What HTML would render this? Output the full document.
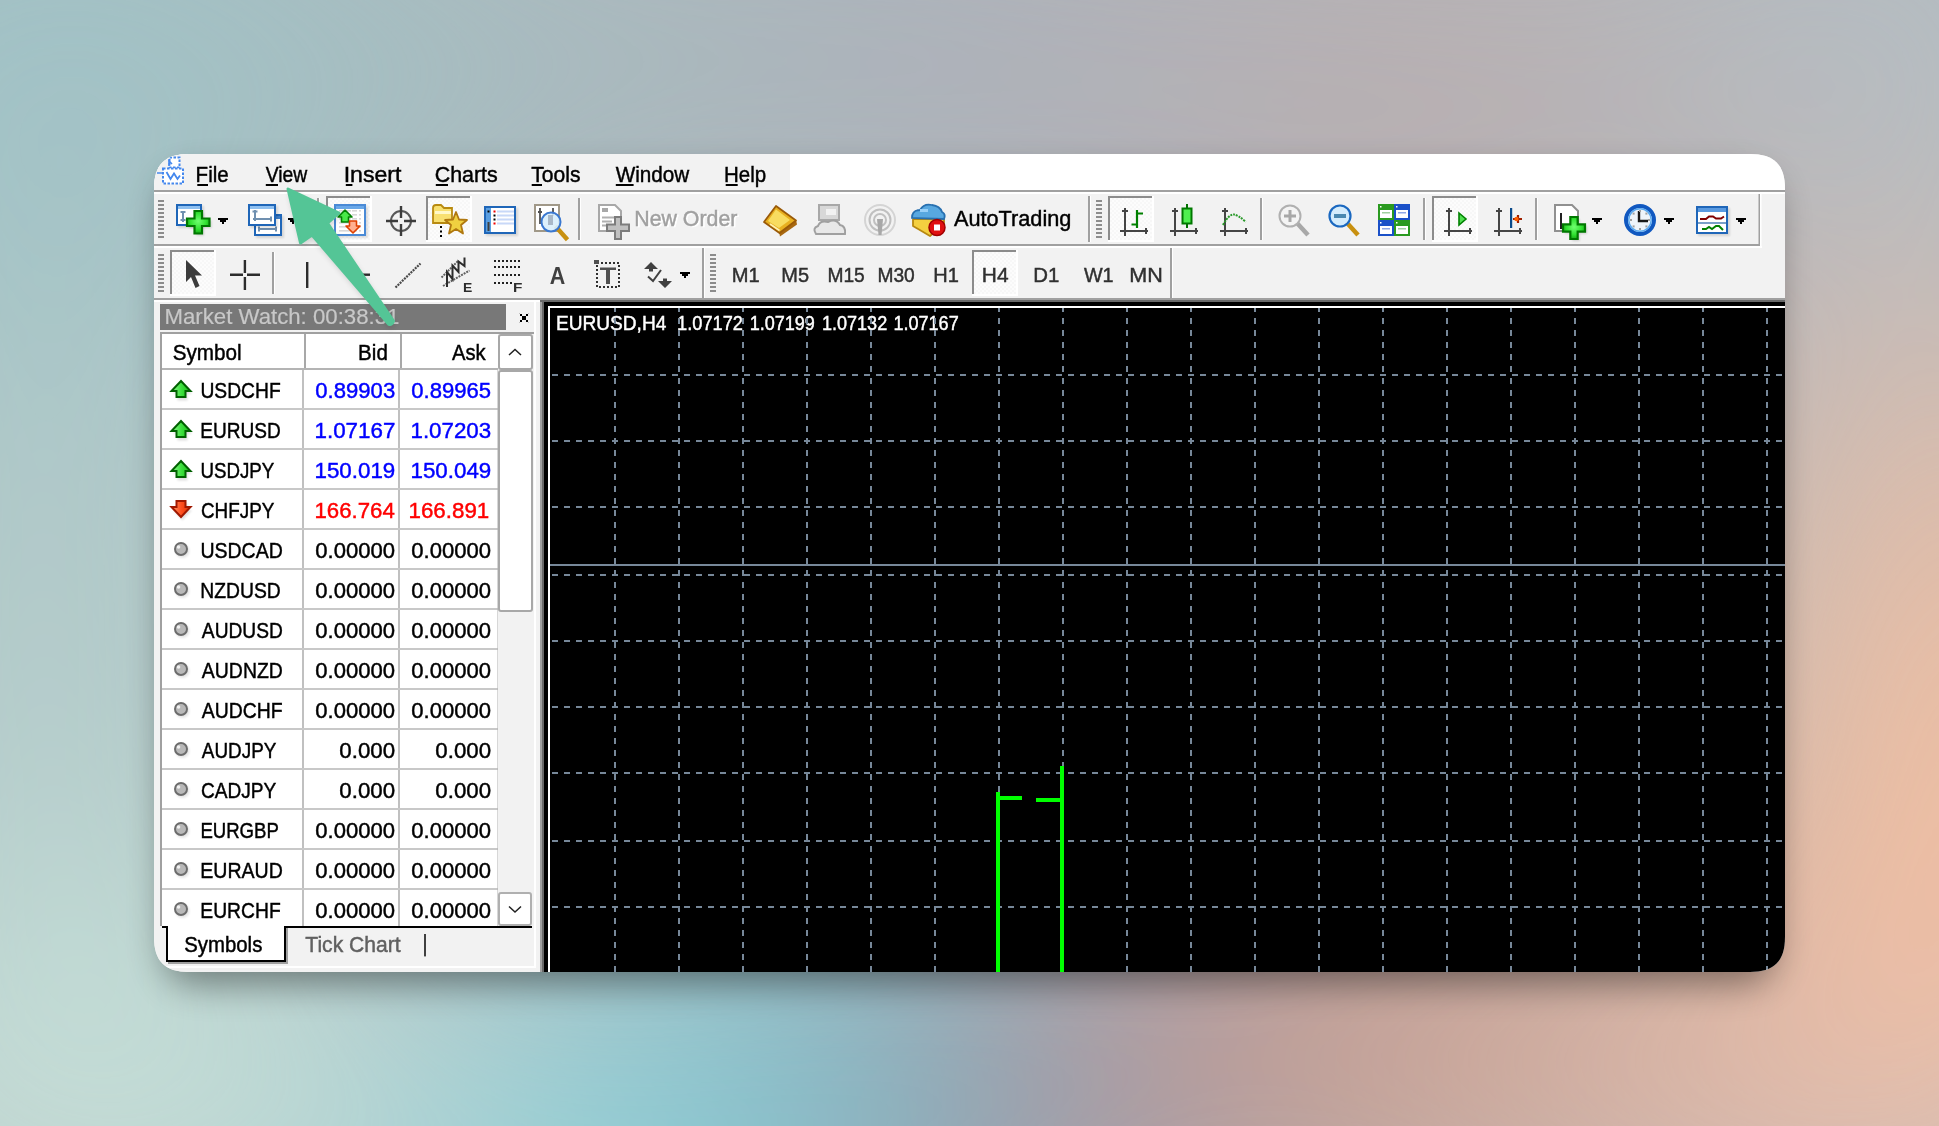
<!DOCTYPE html><html><head><meta charset="utf-8"><style>html,body{margin:0;padding:0;width:1939px;height:1126px;overflow:hidden;background:#b0b8bc}svg{display:block;will-change:transform}text{font-family:"Liberation Sans",sans-serif}</style></head><body>
<svg width="1939" height="1126" viewBox="0 0 1939 1126">
<defs>
<filter id="bgblur" x="-50%" y="-50%" width="200%" height="200%"><feGaussianBlur stdDeviation="170"/></filter>
<filter id="shadow" x="-20%" y="-20%" width="140%" height="140%"><feGaussianBlur stdDeviation="18"/></filter>
<filter id="ishadow" x="-30%" y="-30%" width="160%" height="160%"><feGaussianBlur stdDeviation="1.2"/></filter>
<clipPath id="win"><path d="M189 154 H1750 C1774.15 154 1785 164.85 1785 189 V937 C1785 961.15 1774.15 972 1750 972 H189 C164.85 972 154 961.15 154 937 V189 C154 164.85 164.85 154 189 154 Z"/></clipPath>
<clipPath id="chartclip"><rect x="550" y="308" width="1240" height="664"/></clipPath>
<pattern id="check" width="4" height="4" patternUnits="userSpaceOnUse"><rect width="4" height="4" fill="#f7f7f7"/><rect width="2" height="2" fill="#fcfcfc"/><rect x="2" y="2" width="2" height="2" fill="#fcfcfc"/></pattern>
<filter id="shadow2" x="-30%" y="-30%" width="160%" height="160%"><feGaussianBlur stdDeviation="3"/></filter>
<radialGradient id="gplus" cx="50%" cy="45%" r="60%"><stop offset="0" stop-color="#70ff70"/><stop offset="0.6" stop-color="#30e030"/><stop offset="1" stop-color="#10a010"/></radialGradient>
<linearGradient id="gup" x1="0" y1="0" x2="1" y2="0"><stop offset="0" stop-color="#90ff90"/><stop offset="0.5" stop-color="#40e040"/><stop offset="1" stop-color="#10c010"/></linearGradient>
<linearGradient id="gdn" x1="0" y1="0" x2="1" y2="0"><stop offset="0" stop-color="#ffa070"/><stop offset="0.5" stop-color="#ff5020"/><stop offset="1" stop-color="#e03000"/></linearGradient>
</defs>
<g>
<rect x="0" y="0" width="1939" height="1126" fill="#b2b9bd" />
<g filter="url(#bgblur)">
<ellipse cx="60" cy="80" rx="420" ry="330" fill="#a0c2c6" transform="rotate(0 60 80)"/>
<ellipse cx="40" cy="640" rx="300" ry="330" fill="#b2cccb" transform="rotate(0 40 640)"/>
<ellipse cx="100" cy="1100" rx="380" ry="220" fill="#c8e2da" transform="rotate(0 100 1100)"/>
<ellipse cx="680" cy="1150" rx="320" ry="160" fill="#78d8e2" transform="rotate(-25 680 1150)"/>
<ellipse cx="1030" cy="1100" rx="230" ry="150" fill="#6c80a0" transform="rotate(-30 1030 1100)"/>
<ellipse cx="1390" cy="1030" rx="320" ry="130" fill="#d28a72" transform="rotate(-10 1390 1030)"/>
<ellipse cx="1700" cy="1140" rx="260" ry="140" fill="#e2b8a6" transform="rotate(0 1700 1140)"/>
<ellipse cx="1960" cy="1126" rx="200" ry="160" fill="#e2c2ba" transform="rotate(0 1960 1126)"/>
<ellipse cx="1980" cy="800" rx="240" ry="330" fill="#fcc09c" transform="rotate(0 1980 800)"/>
<ellipse cx="1960" cy="540" rx="220" ry="220" fill="#ecbea4" transform="rotate(0 1960 540)"/>
<ellipse cx="1380" cy="110" rx="380" ry="160" fill="#bcaaab" transform="rotate(0 1380 110)"/>
<ellipse cx="880" cy="60" rx="360" ry="160" fill="#aaadb8" transform="rotate(0 880 60)"/>
<ellipse cx="1900" cy="40" rx="200" ry="200" fill="#b6c0c6" transform="rotate(0 1900 40)"/>
<ellipse cx="500" cy="60" rx="300" ry="160" fill="#a4bcc0" transform="rotate(0 500 60)"/>
</g></g>
<path d="M199 176 H1740 C1764.15 176 1775 186.85 1775 211 V949 C1775 973.15 1764.15 984 1740 984 H199 C174.85 984 164 973.15 164 949 V211 C164 186.85 174.85 176 199 176 Z" fill="#000" opacity="0.42" filter="url(#shadow)"/>
<g clip-path="url(#win)">
<rect x="154" y="154" width="1631" height="818" fill="#f2f2f2" />
<rect x="154" y="154" width="1631" height="36" fill="#ffffff" />
<rect x="154" y="154" width="636" height="36" fill="#f2f2f2" />
<rect x="154" y="190" width="1631" height="2" fill="#a0a0a0" />
<rect x="154" y="192" width="1631" height="2" fill="#ffffff" />
<rect x="154" y="194" width="1631" height="50" fill="#f2f2f2" />
<rect x="154" y="244" width="1606" height="2" fill="#a0a0a0" />
<rect x="154" y="246" width="1608" height="2" fill="#ffffff" />
<rect x="154" y="248" width="1631" height="50" fill="#f2f2f2" />
<rect x="154" y="298" width="1631" height="2" fill="#a0a0a0" />
<rect x="154" y="300" width="1631" height="2" fill="#696969" />
<text x="195.62" y="181.5" font-size="22.4" fill="#000" textLength="33.10" lengthAdjust="spacingAndGlyphs" stroke="#000" stroke-width="0.45" >File</text>
<rect x="197.3" y="184" width="10.7" height="2" fill="#000" />
<text x="265.72" y="181.5" font-size="22.4" fill="#000" textLength="41.54" lengthAdjust="spacingAndGlyphs" stroke="#000" stroke-width="0.45" >View</text>
<rect x="265.8" y="184" width="12.2" height="2" fill="#000" />
<text x="343.67" y="181.5" font-size="22.4" fill="#000" textLength="57.80" lengthAdjust="spacingAndGlyphs" stroke="#000" stroke-width="0.45" >Insert</text>
<rect x="345.8" y="184" width="6.6" height="2" fill="#000" />
<text x="434.71" y="181.5" font-size="22.4" fill="#000" textLength="63.06" lengthAdjust="spacingAndGlyphs" stroke="#000" stroke-width="0.45" >Charts</text>
<rect x="435.8" y="184" width="12.2" height="2" fill="#000" />
<text x="531.25" y="181.5" font-size="22.4" fill="#000" textLength="49.18" lengthAdjust="spacingAndGlyphs" stroke="#000" stroke-width="0.45" >Tools</text>
<rect x="531.7" y="184" width="10.3" height="2" fill="#000" />
<text x="615.71" y="181.5" font-size="22.4" fill="#000" textLength="73.54" lengthAdjust="spacingAndGlyphs" stroke="#000" stroke-width="0.45" >Window</text>
<rect x="615.8" y="184" width="17.8" height="2" fill="#000" />
<text x="724.02" y="181.5" font-size="22.4" fill="#000" textLength="42.14" lengthAdjust="spacingAndGlyphs" stroke="#000" stroke-width="0.45" >Help</text>
<rect x="725.7" y="184" width="12" height="2" fill="#000" />
<g fill="none" stroke="#4488ee" stroke-width="2">
<rect x="169.5" y="157.5" width="10" height="10" fill="#fff" stroke-dasharray="2.5 1.5"/>
<rect x="163" y="168.5" width="20" height="15" fill="#fff" stroke-dasharray="2.5 1.5"/>
<path d="M166.5 172 L170.5 179 L174 173.5 L177.5 179 L180 175.5" stroke-width="1.8"/>
<path d="M157 173 H163" stroke-width="1.6"/>
<path d="M169 166 V161 L172 164" stroke-width="1.6"/>
</g>
<rect x="158" y="200" width="6" height="2" fill="#8c8c8c" />
<rect x="158" y="204" width="6" height="2" fill="#8c8c8c" />
<rect x="158" y="208" width="6" height="2" fill="#8c8c8c" />
<rect x="158" y="212" width="6" height="2" fill="#8c8c8c" />
<rect x="158" y="216" width="6" height="2" fill="#8c8c8c" />
<rect x="158" y="220" width="6" height="2" fill="#8c8c8c" />
<rect x="158" y="224" width="6" height="2" fill="#8c8c8c" />
<rect x="158" y="228" width="6" height="2" fill="#8c8c8c" />
<rect x="158" y="232" width="6" height="2" fill="#8c8c8c" />
<rect x="158" y="236" width="6" height="2" fill="#8c8c8c" />
<rect x="178" y="206" width="26" height="22" fill="#000" opacity="0.12" filter="url(#ishadow)"/>
<rect x="177" y="205" width="24" height="20" fill="#fff" stroke="#1f66b8" stroke-width="2"/>
<rect x="178" y="206" width="22" height="3" fill="#8fc0f0" />
<path d="M183 211 v11 M180.5 212 h5 M180.5 220 h5" stroke="#7090b0" stroke-width="2"/>
<path d="M194.5 211 h7.5 v7.5 h7.5 v7.5 h-7.5 v7.5 h-7.5 v-7.5 h-7.5 v-7.5 h7.5 z" fill="#000" opacity="0.15" transform="translate(2,2)" filter="url(#ishadow)"/>
<path d="M194.5 211 h7.5 v7.5 h7.5 v7.5 h-7.5 v7.5 h-7.5 v-7.5 h-7.5 v-7.5 h7.5 z" fill="url(#gplus)" stroke="#007800" stroke-width="2.2" stroke-linejoin="miter"/>
<path d="M218 218 h10 v2 h-2 v2 h-2 v2 h-2 v-2 h-2 v-2 h-2 z" fill="#000"/>
<rect x="256" y="216" width="28" height="22" fill="#000" opacity="0.12" filter="url(#ishadow)"/>
<rect x="255" y="215" width="26" height="20" fill="#fff" stroke="#1f66b8" stroke-width="2"/>
<rect x="256" y="216" width="24" height="3" fill="#3f7fc8" />
<path d="M258 229 h19 M259 226.5 v5 M276 226.5 v5" stroke="#7090b0" stroke-width="2"/>
<rect x="250" y="206" width="28" height="22" fill="#000" opacity="0.12" filter="url(#ishadow)"/>
<rect x="249" y="205" width="26" height="20" fill="#fff" stroke="#1f66b8" stroke-width="2"/>
<rect x="250" y="206" width="24" height="3" fill="#8fc0f0" />
<path d="M255 210 v11 M252.5 211.5 h5 M253 219 h19 M271 216.5 v5" stroke="#7090b0" stroke-width="2"/>
<path d="M288 218 h10 v2 h-2 v2 h-2 v2 h-2 v-2 h-2 v-2 h-2 z" fill="#000"/>
<rect x="317" y="198" width="2" height="42" fill="#a0a0a0" />
<rect x="319" y="198" width="1" height="42" fill="#ffffff" />
<rect x="326" y="196" width="44" height="44" fill="url(#check)" />
<rect x="326" y="196" width="44" height="2" fill="#8c8c8c" />
<rect x="326" y="196" width="2" height="44" fill="#8c8c8c" />
<rect x="326" y="240" width="46" height="2" fill="#ffffff" />
<rect x="370" y="196" width="2" height="46" fill="#ffffff" />
<rect x="336" y="206" width="32" height="32" fill="#000" opacity="0.12" filter="url(#ishadow)"/>
<rect x="335" y="205" width="30" height="30" fill="#fff" stroke="#4a8ad6" stroke-width="2"/>
<rect x="336" y="206" width="28" height="3" fill="#6aa8e8" />
<rect x="339" y="210" width="12" height="1.6" fill="#d8d8d8" />
<rect x="352" y="210" width="5" height="1.6" fill="#d8d8d8" />
<rect x="359" y="210" width="2" height="1.6" fill="#d8d8d8" />
<rect x="339" y="214" width="12" height="1.6" fill="#d8d8d8" />
<rect x="352" y="214" width="5" height="1.6" fill="#d8d8d8" />
<rect x="359" y="214" width="2" height="1.6" fill="#d8d8d8" />
<rect x="339" y="218" width="12" height="1.6" fill="#d8d8d8" />
<rect x="352" y="218" width="5" height="1.6" fill="#d8d8d8" />
<rect x="359" y="218" width="2" height="1.6" fill="#d8d8d8" />
<rect x="339" y="222" width="12" height="1.6" fill="#d8d8d8" />
<rect x="352" y="222" width="5" height="1.6" fill="#d8d8d8" />
<rect x="359" y="222" width="2" height="1.6" fill="#d8d8d8" />
<rect x="339" y="226" width="12" height="1.6" fill="#d8d8d8" />
<rect x="352" y="226" width="5" height="1.6" fill="#d8d8d8" />
<rect x="359" y="226" width="2" height="1.6" fill="#d8d8d8" />
<rect x="339" y="230" width="12" height="1.6" fill="#d8d8d8" />
<rect x="352" y="230" width="5" height="1.6" fill="#d8d8d8" />
<rect x="359" y="230" width="2" height="1.6" fill="#d8d8d8" />
<path d="M345 210 L352 217 L348.5 217 L348.5 222 L341.5 222 L341.5 217 L338 217 Z" fill="#48e848" stroke="#008000" stroke-width="1.6" stroke-linejoin="round"/>
<path d="M353 233 L360 226 L356.5 226 L356.5 221 L349.5 221 L349.5 226 L346 226 Z" fill="#ffb090" stroke="#e04000" stroke-width="1.6" stroke-linejoin="round"/>
<g stroke="#3c3c3c" fill="none"><circle cx="401" cy="221" r="10" stroke-width="2" opacity="0.85"/><path d="M401 206 v12 M401 224 v12 M386 221 h12 M404 221 h12" stroke-width="2.4"/></g>
<rect x="426" y="196" width="44" height="44" fill="url(#check)" />
<rect x="426" y="196" width="44" height="2" fill="#8c8c8c" />
<rect x="426" y="196" width="2" height="44" fill="#8c8c8c" />
<rect x="426" y="240" width="46" height="2" fill="#ffffff" />
<rect x="470" y="196" width="2" height="46" fill="#ffffff" />
<path d="M433 223 V208 Q433 205 436 205 H441 L444 208 H452 V223 Z" fill="#f8e070" stroke="#b88a10" stroke-width="1.8"/>
<rect x="435" y="211" width="16" height="3" fill="#fff8c8" />
<path d="M456 212 L459 219.5 L467 220 L461 225 L463 233.5 L456 229 L449 233.5 L451 225 L445 220 L453 219.5 Z" fill="#f0d040" stroke="#b07810" stroke-width="1.8" stroke-linejoin="round"/>
<rect x="440" y="226" width="2" height="2" fill="#000" />
<rect x="440" y="230.5" width="2" height="2" fill="#000" />
<rect x="440" y="235" width="2" height="2" fill="#000" />
<rect x="486" y="208" width="32" height="28" fill="#000" opacity="0.12" filter="url(#ishadow)"/>
<rect x="485" y="207" width="30" height="26" fill="#fff" stroke="#1f66b8" stroke-width="2"/>
<rect x="486" y="208" width="5" height="24" fill="#5a9ee0"/>
<rect x="487.5" y="222" width="2" height="9" fill="#404040" />
<rect x="487.5" y="210.5" width="2" height="2" fill="#000" />
<rect x="493.5" y="210.5" width="2" height="2" fill="#f00000" />
<rect x="497" y="210.5" width="17" height="2" fill="#c8d8f8" />
<rect x="493.5" y="214.5" width="2" height="2" fill="#000" />
<rect x="497" y="214.5" width="17" height="2" fill="#c8d8f8" />
<rect x="493.5" y="218.5" width="2" height="2" fill="#000" />
<rect x="497" y="218.5" width="17" height="2" fill="#c8d8f8" />
<rect x="493.5" y="222.5" width="2" height="2" fill="#f00000" />
<rect x="497" y="222.5" width="17" height="2" fill="#c8d8f8" />
<rect x="535" y="205" width="24" height="26" fill="#fff" stroke="#a09888" stroke-width="2"/>
<path d="M540 208 v16 M538 212 h4 M553 208 v8" stroke="#505050" stroke-width="1.8"/>
<path d="M557 228 L566 238" stroke="#c89010" stroke-width="4.5" stroke-linecap="square"/>
<circle cx="551" cy="222" r="9.5" fill="#d8eefc" fill-opacity="0.9" stroke="#3a78d0" stroke-width="2"/>
<rect x="548" y="215" width="5" height="10" fill="#a8b8c8" />
<rect x="578" y="198" width="2" height="42" fill="#a0a0a0" />
<rect x="580" y="198" width="1" height="42" fill="#ffffff" />
<path d="M599 205 H615 L621 211 V231 H599 Z" fill="#fff" stroke="#a8a8a8" stroke-width="2"/>
<rect x="602" y="208" width="6" height="4" fill="#a8a8a8" />
<rect x="602" y="216.5" width="13" height="2" fill="#b0b0b0" />
<rect x="602" y="220.5" width="10" height="2" fill="#b0b0b0" />
<rect x="602" y="224.5" width="8" height="2" fill="#b0b0b0" />
<path d="M615 217 h6 v7.5 h8 v6.5 h-8 v8 h-6 v-8 h-8 v-6.5 h8 z" fill="#c0c0c0" stroke="#7c7c7c" stroke-width="2"/>
<text x="635.75" y="227" font-size="22.4" fill="#ffffff" textLength="103.10" lengthAdjust="spacingAndGlyphs" stroke="#ffffff" stroke-width="0.45" >New Order</text>
<text x="634.25" y="226" font-size="22.4" fill="#a0a0a0" textLength="103.10" lengthAdjust="spacingAndGlyphs" stroke="#a0a0a0" stroke-width="0.45" >New Order</text>
<path d="M779 232 L796 220 L797 224.5 L780 236.5 Z" fill="#a86810"/>
<path d="M776 206 L796 220.5 L779.5 233 L764 222 Z" fill="#e8b020" stroke="#9a5a08" stroke-width="1.8" stroke-linejoin="round"/>
<path d="M776 209.5 L790 220 L779 228 L768 221 Z" fill="#f8dc60"/>
<path d="M770 224 L779.5 230.5" stroke="#fff0b0" stroke-width="1.6"/>
<rect x="819" y="205" width="20" height="15" fill="#d8d8d8" stroke="#a8a8a8" stroke-width="2"/>
<rect x="826" y="209" width="10" height="6" fill="#f2f2f2" />
<path d="M816 234 Q812 228 818 226 Q820 220 828 222 Q836 218 840 225 Q846 226 845 234 Z" fill="#e8e8e8" stroke="#a0a0a0" stroke-width="2"/>
<g fill="none" stroke="#c0c0c0" stroke-width="2"><circle cx="880" cy="220" r="15" stroke="#d4d4d4"/><circle cx="880" cy="220" r="10.5"/><circle cx="880" cy="220" r="6"/></g>
<path d="M877 219 L883 219 L881.5 235 L878.5 235 Z" fill="#a8a8a8"/>
<path d="M913 219 L944 219 L944 224 L930 236 L913 226 Z" fill="#f4d040" stroke="#b88810" stroke-width="1.8" stroke-linejoin="round"/>
<path d="M912 218 Q912 210 920 210 Q924 203 932 205 Q940 206 942 212 Q946 214 944 219 Z" fill="#58a8e0" stroke="#2870b0" stroke-width="1.8"/>
<rect x="920" y="209" width="8" height="3" fill="#98d0f8" />
<circle cx="937" cy="227.5" r="8" fill="#e01010" stroke="#a00000" stroke-width="1.5"/>
<rect x="934" y="224.5" width="6" height="6" fill="#ffffff" />
<text x="953.96" y="225.5" font-size="22.4" fill="#000" textLength="117.43" lengthAdjust="spacingAndGlyphs" stroke="#000" stroke-width="0.45" >AutoTrading</text>
<rect x="1088" y="196" width="2" height="46" fill="#a0a0a0" />
<rect x="1090" y="196" width="1" height="46" fill="#ffffff" />
<rect x="1096" y="200" width="6" height="2" fill="#8c8c8c" />
<rect x="1096" y="204" width="6" height="2" fill="#8c8c8c" />
<rect x="1096" y="208" width="6" height="2" fill="#8c8c8c" />
<rect x="1096" y="212" width="6" height="2" fill="#8c8c8c" />
<rect x="1096" y="216" width="6" height="2" fill="#8c8c8c" />
<rect x="1096" y="220" width="6" height="2" fill="#8c8c8c" />
<rect x="1096" y="224" width="6" height="2" fill="#8c8c8c" />
<rect x="1096" y="228" width="6" height="2" fill="#8c8c8c" />
<rect x="1096" y="232" width="6" height="2" fill="#8c8c8c" />
<rect x="1096" y="236" width="6" height="2" fill="#8c8c8c" />
<rect x="1108" y="196" width="44" height="44" fill="url(#check)" />
<rect x="1108" y="196" width="44" height="2" fill="#8c8c8c" />
<rect x="1108" y="196" width="2" height="44" fill="#8c8c8c" />
<rect x="1108" y="240" width="46" height="2" fill="#ffffff" />
<rect x="1152" y="196" width="2" height="46" fill="#ffffff" />
<rect x="1124" y="208" width="2" height="28" fill="#454545" />
<rect x="1122" y="210" width="6" height="2" fill="#454545" />
<rect x="1120" y="230" width="28" height="2" fill="#454545" />
<rect x="1145" y="228" width="2" height="6" fill="#454545" />
<path d="M1137 210 V228 M1137 213.5 H1143 M1131.5 224.5 H1137" stroke="#008000" stroke-width="2.2"/>
<rect x="1174" y="208" width="2" height="28" fill="#454545" />
<rect x="1172" y="210" width="6" height="2" fill="#454545" />
<rect x="1170" y="230" width="28" height="2" fill="#454545" />
<rect x="1195" y="228" width="2" height="6" fill="#454545" />
<rect x="1186" y="204" width="2" height="24" fill="#007000" />
<rect x="1182.5" y="208.5" width="9" height="15" fill="#50f050" stroke="#007800" stroke-width="2"/>
<rect x="1224" y="208" width="2" height="28" fill="#454545" />
<rect x="1222" y="210" width="6" height="2" fill="#454545" />
<rect x="1220" y="230" width="28" height="2" fill="#454545" />
<rect x="1245" y="228" width="2" height="6" fill="#454545" />
<path d="M1223 225 Q1229 214 1234 214.5 Q1238 215 1246 222" fill="none" stroke="#2a9a2a" stroke-width="2" stroke-dasharray="2 1"/>
<rect x="1260" y="198" width="2" height="42" fill="#a0a0a0" />
<rect x="1262" y="198" width="1" height="42" fill="#ffffff" />
<path d="M1297 223 L1308 235" stroke="#a8a8a8" stroke-width="4.5"/>
<circle cx="1290" cy="216" r="10.5" fill="#f4f4f4" stroke="#b0b0b0" stroke-width="2"/>
<path d="M1290 210 v12 M1284 216 h12" stroke="#a8a8a8" stroke-width="3"/>
<path d="M1348 224 L1358 235" stroke="#c89010" stroke-width="4.5"/>
<circle cx="1340" cy="216" r="10.5" fill="#d4ecfc" stroke="#1a68c0" stroke-width="2.2"/>
<rect x="1334" y="214" width="12" height="4" fill="#4a88b0" />
<rect x="1378" y="204" width="16" height="16" fill="#2a9a20" />
<rect x="1380" y="210" width="12" height="8" fill="#ffffff" />
<rect x="1382" y="212" width="8" height="1.5" fill="#a0d0a0" />
<rect x="1380" y="206" width="1.5" height="1.5" fill="#ffffff" />
<rect x="1394" y="204" width="16" height="16" fill="#1a50c8" />
<rect x="1396" y="210" width="12" height="8" fill="#ffffff" />
<rect x="1398" y="212" width="8" height="1.5" fill="#90a8e8" />
<rect x="1396" y="206" width="1.5" height="1.5" fill="#ffffff" />
<rect x="1378" y="220" width="16" height="16" fill="#1a50c8" />
<rect x="1380" y="226" width="12" height="8" fill="#ffffff" />
<rect x="1382" y="228" width="8" height="1.5" fill="#90a8e8" />
<rect x="1380" y="222" width="1.5" height="1.5" fill="#ffffff" />
<rect x="1394" y="220" width="16" height="16" fill="#2a9a20" />
<rect x="1396" y="226" width="12" height="8" fill="#ffffff" />
<rect x="1398" y="228" width="8" height="1.5" fill="#a0d0a0" />
<rect x="1396" y="222" width="1.5" height="1.5" fill="#ffffff" />
<rect x="1423" y="198" width="2" height="42" fill="#a0a0a0" />
<rect x="1425" y="198" width="1" height="42" fill="#ffffff" />
<rect x="1432" y="196" width="44" height="44" fill="url(#check)" />
<rect x="1432" y="196" width="44" height="2" fill="#8c8c8c" />
<rect x="1432" y="196" width="2" height="44" fill="#8c8c8c" />
<rect x="1432" y="240" width="46" height="2" fill="#ffffff" />
<rect x="1476" y="196" width="2" height="46" fill="#ffffff" />
<rect x="1448" y="208" width="2" height="28" fill="#454545" />
<rect x="1446" y="210" width="6" height="2" fill="#454545" />
<rect x="1444" y="230" width="28" height="2" fill="#454545" />
<rect x="1469" y="228" width="2" height="6" fill="#454545" />
<path d="M1459 213 L1466 219 L1459 225 Z" fill="#50e050" stroke="#008000" stroke-width="1.6"/>
<rect x="1498" y="208" width="2" height="28" fill="#454545" />
<rect x="1496" y="210" width="6" height="2" fill="#454545" />
<rect x="1494" y="230" width="28" height="2" fill="#454545" />
<rect x="1519" y="228" width="2" height="6" fill="#454545" />
<rect x="1510" y="208" width="2.2" height="20" fill="#0a4a8a" />
<path d="M1513 219 H1522 M1518 215 V223" stroke="#a02000" stroke-width="2.2"/>
<circle cx="1516.5" cy="219" r="2.2" fill="#ff6000"/>
<rect x="1535" y="198" width="2" height="42" fill="#a0a0a0" />
<rect x="1537" y="198" width="1" height="42" fill="#ffffff" />
<path d="M1555 205 H1572 L1578 211 V231 H1555 Z" fill="#fff" stroke="#909090" stroke-width="2"/>
<rect x="1560" y="213" width="2" height="16" fill="#202020" />
<path d="M1570.3333333333333 217 h7.333333333333333 v7.333333333333333 h7.333333333333333 v7.333333333333333 h-7.333333333333333 v7.333333333333333 h-7.333333333333333 v-7.333333333333333 h-7.333333333333333 v-7.333333333333333 h7.333333333333333 z" fill="#000" opacity="0.15" transform="translate(2,2)" filter="url(#ishadow)"/>
<path d="M1570.3333333333333 217 h7.333333333333333 v7.333333333333333 h7.333333333333333 v7.333333333333333 h-7.333333333333333 v7.333333333333333 h-7.333333333333333 v-7.333333333333333 h-7.333333333333333 v-7.333333333333333 h7.333333333333333 z" fill="url(#gplus)" stroke="#007800" stroke-width="2.2" stroke-linejoin="miter"/>
<path d="M1592 218 h10 v2 h-2 v2 h-2 v2 h-2 v-2 h-2 v-2 h-2 z" fill="#000"/>
<circle cx="1640" cy="220" r="14" fill="#eef4fa" stroke="#1058c0" stroke-width="4"/>
<circle cx="1640" cy="220" r="11.2" fill="none" stroke="#5aaaf0" stroke-width="1.4"/>
<path d="M1639 211 V221 H1648" fill="none" stroke="#181818" stroke-width="2.4"/>
<rect x="1639" y="210" width="2" height="2" fill="#a0a0a0" />
<rect x="1648" y="219" width="2" height="2" fill="#a0a0a0" />
<rect x="1639" y="228" width="2" height="2" fill="#a0a0a0" />
<rect x="1630" y="219" width="2" height="2" fill="#a0a0a0" />
<rect x="1645.4" y="212.6" width="2" height="2" fill="#a0a0a0" />
<rect x="1645.4" y="225.4" width="2" height="2" fill="#a0a0a0" />
<rect x="1632.6" y="225.4" width="2" height="2" fill="#a0a0a0" />
<rect x="1632.6" y="212.6" width="2" height="2" fill="#a0a0a0" />
<path d="M1664 218 h10 v2 h-2 v2 h-2 v2 h-2 v-2 h-2 v-2 h-2 z" fill="#000"/>
<rect x="1698" y="208" width="32" height="28" fill="#000" opacity="0.12" filter="url(#ishadow)"/>
<rect x="1697" y="207" width="30" height="26" fill="#fff" stroke="#1f66b8" stroke-width="2"/>
<rect x="1698" y="208" width="28" height="4" fill="#5a9ae0" />
<rect x="1698" y="222" width="28" height="2" fill="#7aa0c8" />
<path d="M1700 219 L1706 219 L1709 216.5 L1713 216.5 L1716 218.5 L1721 218.5 L1724 216.5" fill="none" stroke="#800000" stroke-width="2"/>
<path d="M1702 229 L1706 229 L1709 227 L1712 229 L1716 226 L1719 226 L1723 230" fill="none" stroke="#008000" stroke-width="2"/>
<path d="M1736 218 h10 v2 h-2 v2 h-2 v2 h-2 v-2 h-2 v-2 h-2 z" fill="#000"/>
<rect x="1758.5" y="194" width="1.5" height="52" fill="#a0a0a0" />
<rect x="1760" y="194" width="1.5" height="53" fill="#ffffff" />
<rect x="158" y="254" width="6" height="2" fill="#8c8c8c" />
<rect x="158" y="258" width="6" height="2" fill="#8c8c8c" />
<rect x="158" y="262" width="6" height="2" fill="#8c8c8c" />
<rect x="158" y="266" width="6" height="2" fill="#8c8c8c" />
<rect x="158" y="270" width="6" height="2" fill="#8c8c8c" />
<rect x="158" y="274" width="6" height="2" fill="#8c8c8c" />
<rect x="158" y="278" width="6" height="2" fill="#8c8c8c" />
<rect x="158" y="282" width="6" height="2" fill="#8c8c8c" />
<rect x="158" y="286" width="6" height="2" fill="#8c8c8c" />
<rect x="158" y="290" width="6" height="2" fill="#8c8c8c" />
<rect x="170" y="250" width="44" height="44" fill="url(#check)" />
<rect x="170" y="250" width="44" height="2" fill="#8c8c8c" />
<rect x="170" y="250" width="2" height="44" fill="#8c8c8c" />
<rect x="170" y="294" width="46" height="2" fill="#ffffff" />
<rect x="214" y="250" width="2" height="46" fill="#ffffff" />
<path d="M186 260 V282 L191 277 L195.5 288 L199.5 286 L195 275.5 L202 275.5 Z" fill="#3c3c3c"/>
<path d="M230 274.7 H243 M247 274.7 H260 M244.9 260 V273 M244.9 277 V290" stroke="#2c2c2c" stroke-width="2.4"/>
<rect x="272" y="252" width="2" height="42" fill="#a0a0a0" />
<rect x="274" y="252" width="1" height="42" fill="#ffffff" />
<rect x="306" y="262" width="2.4" height="26" fill="#2c2c2c" />
<rect x="346" y="273.5" width="24" height="2.4" fill="#2c2c2c" />
<path d="M395.5 287.5 L420.5 263.5" stroke="#4a4a4a" stroke-width="2.2" stroke-dasharray="2 1"/>
<g stroke="#606060" stroke-width="2" stroke-dasharray="2 1"><path d="M441.5 277.5 L458.5 260.5"/><path d="M443 286 L469.5 270.5"/></g>
<path d="M447 287 V272 L452.5 279 V265.5 L458.5 272 V261.5 L464.5 266 V257.5" fill="none" stroke="#2c2c2c" stroke-width="2"/>
<text x="463.07" y="291.8" font-size="13" fill="#2c2c2c" textLength="9.27" lengthAdjust="spacingAndGlyphs" font-weight="bold" >E</text>
<line x1="494" y1="261" x2="520" y2="261" stroke="#202020" stroke-width="2" stroke-dasharray="2 2"/>
<line x1="494" y1="267" x2="520" y2="267" stroke="#202020" stroke-width="2" stroke-dasharray="2 2"/>
<line x1="494" y1="275" x2="520" y2="275" stroke="#202020" stroke-width="2" stroke-dasharray="2 2"/>
<line x1="494" y1="283" x2="513" y2="283" stroke="#202020" stroke-width="2" stroke-dasharray="2 2"/>
<text x="512.97" y="291.8" font-size="13" fill="#2c2c2c" textLength="9.39" lengthAdjust="spacingAndGlyphs" font-weight="bold" >F</text>
<text x="549.67" y="283.5" font-size="24" fill="#404040" textLength="15.50" lengthAdjust="spacingAndGlyphs" font-weight="bold" >A</text>
<rect x="597" y="263" width="22" height="24" fill="none" stroke="#303030" stroke-width="2" stroke-dasharray="2 2"/>
<rect x="594" y="260" width="5" height="4" fill="#505050" />
<rect x="600" y="267.5" width="16" height="2.5" fill="#505050" />
<rect x="606" y="268" width="4" height="16" fill="#505050" />
<path d="M651 262 L658 269 L653 269 L653 271.5 L649 271.5 L649 269 L644 269 Z" fill="#404040"/>
<path d="M648 276.5 L653 281 L661 270" fill="none" stroke="#404040" stroke-width="2"/>
<path d="M665 288 L672 281 L667 281 L667 278.5 L663 278.5 L663 281 L658 281 Z" fill="#404040"/>
<path d="M680 272 h10 v2 h-2 v2 h-2 v2 h-2 v-2 h-2 v-2 h-2 z" fill="#000"/>
<rect x="702" y="248" width="2" height="50" fill="#a0a0a0" />
<rect x="704" y="248" width="1" height="50" fill="#ffffff" />
<rect x="710" y="254" width="6" height="2" fill="#8c8c8c" />
<rect x="710" y="258" width="6" height="2" fill="#8c8c8c" />
<rect x="710" y="262" width="6" height="2" fill="#8c8c8c" />
<rect x="710" y="266" width="6" height="2" fill="#8c8c8c" />
<rect x="710" y="270" width="6" height="2" fill="#8c8c8c" />
<rect x="710" y="274" width="6" height="2" fill="#8c8c8c" />
<rect x="710" y="278" width="6" height="2" fill="#8c8c8c" />
<rect x="710" y="282" width="6" height="2" fill="#8c8c8c" />
<rect x="710" y="286" width="6" height="2" fill="#8c8c8c" />
<rect x="710" y="290" width="6" height="2" fill="#8c8c8c" />
<rect x="972" y="250" width="44" height="44" fill="url(#check)" />
<rect x="972" y="250" width="44" height="2" fill="#8c8c8c" />
<rect x="972" y="250" width="2" height="44" fill="#8c8c8c" />
<rect x="972" y="294" width="46" height="2" fill="#ffffff" />
<rect x="1016" y="250" width="2" height="46" fill="#ffffff" />
<rect x="1170" y="248" width="2" height="50" fill="#a0a0a0" />
<rect x="1172" y="248" width="1" height="50" fill="#ffffff" />
<text x="731.85" y="282" font-size="20.3" fill="#303030" textLength="27.93" lengthAdjust="spacingAndGlyphs" stroke="#303030" stroke-width="0.45" >M1</text>
<text x="781.36" y="282" font-size="20.3" fill="#303030" textLength="27.78" lengthAdjust="spacingAndGlyphs" stroke="#303030" stroke-width="0.45" >M5</text>
<text x="827.42" y="282" font-size="20.3" fill="#303030" textLength="37.38" lengthAdjust="spacingAndGlyphs" stroke="#303030" stroke-width="0.45" >M15</text>
<text x="877.43" y="282" font-size="20.3" fill="#303030" textLength="37.32" lengthAdjust="spacingAndGlyphs" stroke="#303030" stroke-width="0.45" >M30</text>
<text x="933.36" y="282" font-size="20.3" fill="#303030" textLength="25.62" lengthAdjust="spacingAndGlyphs" stroke="#303030" stroke-width="0.45" >H1</text>
<text x="981.88" y="282" font-size="20.3" fill="#303030" textLength="26.73" lengthAdjust="spacingAndGlyphs" stroke="#303030" stroke-width="0.45" >H4</text>
<text x="1033.33" y="282" font-size="20.3" fill="#303030" textLength="26.07" lengthAdjust="spacingAndGlyphs" stroke="#303030" stroke-width="0.45" >D1</text>
<text x="1083.91" y="282" font-size="20.3" fill="#303030" textLength="29.65" lengthAdjust="spacingAndGlyphs" stroke="#303030" stroke-width="0.45" >W1</text>
<text x="1129.23" y="282" font-size="20.3" fill="#303030" textLength="33.53" lengthAdjust="spacingAndGlyphs" stroke="#303030" stroke-width="0.45" >MN</text>
<rect x="154" y="302" width="386" height="670" fill="#f2f2f2" />
<rect x="154" y="300" width="386" height="2" fill="#ffffff" />
<rect x="534" y="302" width="2" height="666" fill="#ffffff" />
<rect x="160" y="966" width="376" height="2" fill="#ffffff" />
<rect x="160" y="304" width="346" height="26" fill="#787878" />
<text x="164.48" y="324" font-size="22.4" fill="#c8c8c8" textLength="234.90" lengthAdjust="spacingAndGlyphs" stroke="#c8c8c8" stroke-width="0.2" >Market Watch: 00:38:31</text>
<path d="M520 314h2v2h-2z M526 314h2v2h-2z M520 320h2v2h-2z M526 320h2v2h-2z M522 316h4v4h-4z" fill="#000"/><path d="M519 313 L529 323 M529 313 L519 323" stroke="#000" stroke-width="0.8" opacity="0.25"/>
<rect x="160" y="332" width="374" height="2" fill="#a0a0a0" />
<rect x="160" y="332" width="2" height="594" fill="#a0a0a0" />
<rect x="162" y="334" width="336" height="592" fill="#ffffff" />
<rect x="304" y="334" width="2" height="35" fill="#a8a8a8" />
<rect x="400" y="334" width="2" height="35" fill="#a8a8a8" />
<rect x="162" y="368" width="336" height="2" fill="#b4b4b4" />
<text x="172.76" y="360" font-size="22.4" fill="#000" textLength="68.92" lengthAdjust="spacingAndGlyphs" stroke="#000" stroke-width="0.45" >Symbol</text>
<text x="358.11" y="360" font-size="22.4" fill="#000" textLength="29.71" lengthAdjust="spacingAndGlyphs" stroke="#000" stroke-width="0.45" >Bid</text>
<text x="451.96" y="360" font-size="22.4" fill="#000" textLength="33.61" lengthAdjust="spacingAndGlyphs" stroke="#000" stroke-width="0.45" >Ask</text>
<rect x="302" y="370" width="2" height="40" fill="#c0c0c0" />
<rect x="398" y="370" width="2" height="40" fill="#c0c0c0" />
<rect x="162" y="408" width="336" height="2" fill="#c8c8c8" />
<text x="200.41" y="398" font-size="22.4" fill="#000" textLength="80.26" lengthAdjust="spacingAndGlyphs" stroke="#000" stroke-width="0.45" >USDCHF</text>
<text x="315.34" y="398" font-size="22.4" fill="#0000ff" textLength="79.83" lengthAdjust="spacingAndGlyphs" stroke="#0000ff" stroke-width="0.45" >0.89903</text>
<text x="411.34" y="398" font-size="22.4" fill="#0000ff" textLength="79.79" lengthAdjust="spacingAndGlyphs" stroke="#0000ff" stroke-width="0.45" >0.89965</text>
<g transform="translate(181,389)"><path d="M-9.5 3 L0 -7.5 L9.5 3 L5 3 L5 9.5 L-5 9.5 L-5 3 Z" fill="#000" opacity="0.12" transform="translate(1.5,2)" filter="url(#ishadow)"/><path d="M-9.5 2 L0 -8 L9.5 2 L4.5 2 L4.5 8 L-4.5 8 L-4.5 2 Z" fill="url(#gup)" stroke="#006000" stroke-width="2" stroke-linejoin="miter"/></g>
<rect x="302" y="410" width="2" height="40" fill="#c0c0c0" />
<rect x="398" y="410" width="2" height="40" fill="#c0c0c0" />
<rect x="162" y="448" width="336" height="2" fill="#c8c8c8" />
<text x="200.34" y="438" font-size="22.4" fill="#000" textLength="80.48" lengthAdjust="spacingAndGlyphs" stroke="#000" stroke-width="0.45" >EURUSD</text>
<text x="314.50" y="438" font-size="22.4" fill="#0000ff" textLength="80.83" lengthAdjust="spacingAndGlyphs" stroke="#0000ff" stroke-width="0.45" >1.07167</text>
<text x="410.50" y="438" font-size="22.4" fill="#0000ff" textLength="80.68" lengthAdjust="spacingAndGlyphs" stroke="#0000ff" stroke-width="0.45" >1.07203</text>
<g transform="translate(181,429)"><path d="M-9.5 3 L0 -7.5 L9.5 3 L5 3 L5 9.5 L-5 9.5 L-5 3 Z" fill="#000" opacity="0.12" transform="translate(1.5,2)" filter="url(#ishadow)"/><path d="M-9.5 2 L0 -8 L9.5 2 L4.5 2 L4.5 8 L-4.5 8 L-4.5 2 Z" fill="url(#gup)" stroke="#006000" stroke-width="2" stroke-linejoin="miter"/></g>
<rect x="302" y="450" width="2" height="40" fill="#c0c0c0" />
<rect x="398" y="450" width="2" height="40" fill="#c0c0c0" />
<rect x="162" y="488" width="336" height="2" fill="#c8c8c8" />
<text x="200.46" y="478" font-size="22.4" fill="#000" textLength="73.86" lengthAdjust="spacingAndGlyphs" stroke="#000" stroke-width="0.45" >USDJPY</text>
<text x="314.50" y="478" font-size="22.4" fill="#0000ff" textLength="80.76" lengthAdjust="spacingAndGlyphs" stroke="#0000ff" stroke-width="0.45" >150.019</text>
<text x="410.50" y="478" font-size="22.4" fill="#0000ff" textLength="80.76" lengthAdjust="spacingAndGlyphs" stroke="#0000ff" stroke-width="0.45" >150.049</text>
<g transform="translate(181,469)"><path d="M-9.5 3 L0 -7.5 L9.5 3 L5 3 L5 9.5 L-5 9.5 L-5 3 Z" fill="#000" opacity="0.12" transform="translate(1.5,2)" filter="url(#ishadow)"/><path d="M-9.5 2 L0 -8 L9.5 2 L4.5 2 L4.5 8 L-4.5 8 L-4.5 2 Z" fill="url(#gup)" stroke="#006000" stroke-width="2" stroke-linejoin="miter"/></g>
<rect x="302" y="490" width="2" height="40" fill="#c0c0c0" />
<rect x="398" y="490" width="2" height="40" fill="#c0c0c0" />
<rect x="162" y="528" width="336" height="2" fill="#c8c8c8" />
<text x="200.94" y="518" font-size="22.4" fill="#000" textLength="73.37" lengthAdjust="spacingAndGlyphs" stroke="#000" stroke-width="0.45" >CHFJPY</text>
<text x="314.51" y="518" font-size="22.4" fill="#ff0000" textLength="80.34" lengthAdjust="spacingAndGlyphs" stroke="#ff0000" stroke-width="0.45" >166.764</text>
<text x="408.50" y="518" font-size="22.4" fill="#ff0000" textLength="80.79" lengthAdjust="spacingAndGlyphs" stroke="#ff0000" stroke-width="0.45" >166.891</text>
<g transform="translate(181,509)"><path d="M-9.5 -1 L0 9.5 L9.5 -1 L5 -1 L5 -7.5 L-5 -7.5 L-5 -1 Z" fill="#000" opacity="0.12" transform="translate(1.5,2)" filter="url(#ishadow)"/><path d="M-9.5 -2 L0 8 L9.5 -2 L4.5 -2 L4.5 -8 L-4.5 -8 L-4.5 -2 Z" fill="url(#gdn)" stroke="#a01800" stroke-width="2" stroke-linejoin="miter"/></g>
<rect x="302" y="530" width="2" height="40" fill="#c0c0c0" />
<rect x="398" y="530" width="2" height="40" fill="#c0c0c0" />
<rect x="162" y="568" width="336" height="2" fill="#c8c8c8" />
<text x="200.39" y="558" font-size="22.4" fill="#000" textLength="82.44" lengthAdjust="spacingAndGlyphs" stroke="#000" stroke-width="0.45" >USDCAD</text>
<text x="315.34" y="558" font-size="22.4" fill="#000" textLength="79.72" lengthAdjust="spacingAndGlyphs" stroke="#000" stroke-width="0.45" >0.00000</text>
<text x="411.34" y="558" font-size="22.4" fill="#000" textLength="79.72" lengthAdjust="spacingAndGlyphs" stroke="#000" stroke-width="0.45" >0.00000</text>
<circle cx="182.5" cy="551" r="7" fill="#000" opacity="0.1" filter="url(#ishadow)"/><circle cx="181" cy="549" r="6" fill="#b8b8b8" stroke="#6c6c6c" stroke-width="2"/><circle cx="178.5" cy="547" r="1.8" fill="#f0f0f0"/>
<rect x="302" y="570" width="2" height="40" fill="#c0c0c0" />
<rect x="398" y="570" width="2" height="40" fill="#c0c0c0" />
<rect x="162" y="608" width="336" height="2" fill="#c8c8c8" />
<text x="200.31" y="598" font-size="22.4" fill="#000" textLength="80.51" lengthAdjust="spacingAndGlyphs" stroke="#000" stroke-width="0.45" >NZDUSD</text>
<text x="315.34" y="598" font-size="22.4" fill="#000" textLength="79.72" lengthAdjust="spacingAndGlyphs" stroke="#000" stroke-width="0.45" >0.00000</text>
<text x="411.34" y="598" font-size="22.4" fill="#000" textLength="79.72" lengthAdjust="spacingAndGlyphs" stroke="#000" stroke-width="0.45" >0.00000</text>
<circle cx="182.5" cy="591" r="7" fill="#000" opacity="0.1" filter="url(#ishadow)"/><circle cx="181" cy="589" r="6" fill="#b8b8b8" stroke="#6c6c6c" stroke-width="2"/><circle cx="178.5" cy="587" r="1.8" fill="#f0f0f0"/>
<rect x="302" y="610" width="2" height="40" fill="#c0c0c0" />
<rect x="398" y="610" width="2" height="40" fill="#c0c0c0" />
<rect x="162" y="648" width="336" height="2" fill="#c8c8c8" />
<text x="201.86" y="638" font-size="22.4" fill="#000" textLength="80.95" lengthAdjust="spacingAndGlyphs" stroke="#000" stroke-width="0.45" >AUDUSD</text>
<text x="315.34" y="638" font-size="22.4" fill="#000" textLength="79.72" lengthAdjust="spacingAndGlyphs" stroke="#000" stroke-width="0.45" >0.00000</text>
<text x="411.34" y="638" font-size="22.4" fill="#000" textLength="79.72" lengthAdjust="spacingAndGlyphs" stroke="#000" stroke-width="0.45" >0.00000</text>
<circle cx="182.5" cy="631" r="7" fill="#000" opacity="0.1" filter="url(#ishadow)"/><circle cx="181" cy="629" r="6" fill="#b8b8b8" stroke="#6c6c6c" stroke-width="2"/><circle cx="178.5" cy="627" r="1.8" fill="#f0f0f0"/>
<rect x="302" y="650" width="2" height="40" fill="#c0c0c0" />
<rect x="398" y="650" width="2" height="40" fill="#c0c0c0" />
<rect x="162" y="688" width="336" height="2" fill="#c8c8c8" />
<text x="201.86" y="678" font-size="22.4" fill="#000" textLength="80.97" lengthAdjust="spacingAndGlyphs" stroke="#000" stroke-width="0.45" >AUDNZD</text>
<text x="315.34" y="678" font-size="22.4" fill="#000" textLength="79.72" lengthAdjust="spacingAndGlyphs" stroke="#000" stroke-width="0.45" >0.00000</text>
<text x="411.34" y="678" font-size="22.4" fill="#000" textLength="79.72" lengthAdjust="spacingAndGlyphs" stroke="#000" stroke-width="0.45" >0.00000</text>
<circle cx="182.5" cy="671" r="7" fill="#000" opacity="0.1" filter="url(#ishadow)"/><circle cx="181" cy="669" r="6" fill="#b8b8b8" stroke="#6c6c6c" stroke-width="2"/><circle cx="178.5" cy="667" r="1.8" fill="#f0f0f0"/>
<rect x="302" y="690" width="2" height="40" fill="#c0c0c0" />
<rect x="398" y="690" width="2" height="40" fill="#c0c0c0" />
<rect x="162" y="728" width="336" height="2" fill="#c8c8c8" />
<text x="201.86" y="718" font-size="22.4" fill="#000" textLength="80.81" lengthAdjust="spacingAndGlyphs" stroke="#000" stroke-width="0.45" >AUDCHF</text>
<text x="315.34" y="718" font-size="22.4" fill="#000" textLength="79.72" lengthAdjust="spacingAndGlyphs" stroke="#000" stroke-width="0.45" >0.00000</text>
<text x="411.34" y="718" font-size="22.4" fill="#000" textLength="79.72" lengthAdjust="spacingAndGlyphs" stroke="#000" stroke-width="0.45" >0.00000</text>
<circle cx="182.5" cy="711" r="7" fill="#000" opacity="0.1" filter="url(#ishadow)"/><circle cx="181" cy="709" r="6" fill="#b8b8b8" stroke="#6c6c6c" stroke-width="2"/><circle cx="178.5" cy="707" r="1.8" fill="#f0f0f0"/>
<rect x="302" y="730" width="2" height="40" fill="#c0c0c0" />
<rect x="398" y="730" width="2" height="40" fill="#c0c0c0" />
<rect x="162" y="768" width="336" height="2" fill="#c8c8c8" />
<text x="201.86" y="758" font-size="22.4" fill="#000" textLength="74.45" lengthAdjust="spacingAndGlyphs" stroke="#000" stroke-width="0.45" >AUDJPY</text>
<text x="339.33" y="758" font-size="22.4" fill="#000" textLength="55.74" lengthAdjust="spacingAndGlyphs" stroke="#000" stroke-width="0.45" >0.000</text>
<text x="435.33" y="758" font-size="22.4" fill="#000" textLength="55.74" lengthAdjust="spacingAndGlyphs" stroke="#000" stroke-width="0.45" >0.000</text>
<circle cx="182.5" cy="751" r="7" fill="#000" opacity="0.1" filter="url(#ishadow)"/><circle cx="181" cy="749" r="6" fill="#b8b8b8" stroke="#6c6c6c" stroke-width="2"/><circle cx="178.5" cy="747" r="1.8" fill="#f0f0f0"/>
<rect x="302" y="770" width="2" height="40" fill="#c0c0c0" />
<rect x="398" y="770" width="2" height="40" fill="#c0c0c0" />
<rect x="162" y="808" width="336" height="2" fill="#c8c8c8" />
<text x="200.93" y="798" font-size="22.4" fill="#000" textLength="75.39" lengthAdjust="spacingAndGlyphs" stroke="#000" stroke-width="0.45" >CADJPY</text>
<text x="339.33" y="798" font-size="22.4" fill="#000" textLength="55.74" lengthAdjust="spacingAndGlyphs" stroke="#000" stroke-width="0.45" >0.000</text>
<text x="435.33" y="798" font-size="22.4" fill="#000" textLength="55.74" lengthAdjust="spacingAndGlyphs" stroke="#000" stroke-width="0.45" >0.000</text>
<circle cx="182.5" cy="791" r="7" fill="#000" opacity="0.1" filter="url(#ishadow)"/><circle cx="181" cy="789" r="6" fill="#b8b8b8" stroke="#6c6c6c" stroke-width="2"/><circle cx="178.5" cy="787" r="1.8" fill="#f0f0f0"/>
<rect x="302" y="810" width="2" height="40" fill="#c0c0c0" />
<rect x="398" y="810" width="2" height="40" fill="#c0c0c0" />
<rect x="162" y="848" width="336" height="2" fill="#c8c8c8" />
<text x="200.38" y="838" font-size="22.4" fill="#000" textLength="78.51" lengthAdjust="spacingAndGlyphs" stroke="#000" stroke-width="0.45" >EURGBP</text>
<text x="315.34" y="838" font-size="22.4" fill="#000" textLength="79.72" lengthAdjust="spacingAndGlyphs" stroke="#000" stroke-width="0.45" >0.00000</text>
<text x="411.34" y="838" font-size="22.4" fill="#000" textLength="79.72" lengthAdjust="spacingAndGlyphs" stroke="#000" stroke-width="0.45" >0.00000</text>
<circle cx="182.5" cy="831" r="7" fill="#000" opacity="0.1" filter="url(#ishadow)"/><circle cx="181" cy="829" r="6" fill="#b8b8b8" stroke="#6c6c6c" stroke-width="2"/><circle cx="178.5" cy="827" r="1.8" fill="#f0f0f0"/>
<rect x="302" y="850" width="2" height="40" fill="#c0c0c0" />
<rect x="398" y="850" width="2" height="40" fill="#c0c0c0" />
<rect x="162" y="888" width="336" height="2" fill="#c8c8c8" />
<text x="200.30" y="878" font-size="22.4" fill="#000" textLength="82.54" lengthAdjust="spacingAndGlyphs" stroke="#000" stroke-width="0.45" >EURAUD</text>
<text x="315.34" y="878" font-size="22.4" fill="#000" textLength="79.72" lengthAdjust="spacingAndGlyphs" stroke="#000" stroke-width="0.45" >0.00000</text>
<text x="411.34" y="878" font-size="22.4" fill="#000" textLength="79.72" lengthAdjust="spacingAndGlyphs" stroke="#000" stroke-width="0.45" >0.00000</text>
<circle cx="182.5" cy="871" r="7" fill="#000" opacity="0.1" filter="url(#ishadow)"/><circle cx="181" cy="869" r="6" fill="#b8b8b8" stroke="#6c6c6c" stroke-width="2"/><circle cx="178.5" cy="867" r="1.8" fill="#f0f0f0"/>
<rect x="302" y="890" width="2" height="36" fill="#c0c0c0" />
<rect x="398" y="890" width="2" height="36" fill="#c0c0c0" />
<text x="200.32" y="918" font-size="22.4" fill="#000" textLength="80.35" lengthAdjust="spacingAndGlyphs" stroke="#000" stroke-width="0.45" >EURCHF</text>
<text x="315.34" y="918" font-size="22.4" fill="#000" textLength="79.72" lengthAdjust="spacingAndGlyphs" stroke="#000" stroke-width="0.45" >0.00000</text>
<text x="411.34" y="918" font-size="22.4" fill="#000" textLength="79.72" lengthAdjust="spacingAndGlyphs" stroke="#000" stroke-width="0.45" >0.00000</text>
<circle cx="182.5" cy="911" r="7" fill="#000" opacity="0.1" filter="url(#ishadow)"/><circle cx="181" cy="909" r="6" fill="#b8b8b8" stroke="#6c6c6c" stroke-width="2"/><circle cx="178.5" cy="907" r="1.8" fill="#f0f0f0"/>
<rect x="497.5" y="370" width="2" height="556" fill="#b0b0b0" />
<rect x="498" y="334" width="36" height="592" fill="#f2f2f2" />
<rect x="499" y="335" width="33" height="34" fill="#fff" stroke="#a8a8a8" stroke-width="2" rx="2"/>
<path d="M509 355 L515 349.5 L521 355" fill="none" stroke="#202020" stroke-width="1.5"/>
<rect x="499" y="371" width="33" height="240" fill="#fff" stroke="#a8a8a8" stroke-width="2" rx="2"/>
<rect x="499" y="893" width="32" height="32" fill="#fff" stroke="#b0b0b0" stroke-width="2" rx="2"/>
<path d="M509 906.5 L515 912 L521 906.5" fill="none" stroke="#202020" stroke-width="1.5"/>
<rect x="162" y="926" width="372" height="40" fill="#f2f2f2" />
<rect x="284" y="926" width="248" height="2" fill="#000" />
<rect x="162" y="926" width="6" height="2" fill="#000" />
<rect x="168" y="926" width="116" height="34" fill="#ffffff" />
<rect x="166" y="926" width="2" height="36" fill="#000" />
<rect x="166" y="960" width="120" height="2" fill="#000" />
<rect x="284" y="926" width="2" height="36" fill="#000" />
<rect x="168" y="962" width="120" height="2" fill="#a0a0a0" />
<rect x="286" y="928" width="2" height="36" fill="#a0a0a0" />
<text x="184.28" y="951.5" font-size="22.4" fill="#000" textLength="78.06" lengthAdjust="spacingAndGlyphs" stroke="#000" stroke-width="0.45" >Symbols</text>
<text x="305.33" y="951.5" font-size="22.4" fill="#606060" textLength="95.22" lengthAdjust="spacingAndGlyphs" stroke="#606060" stroke-width="0.45" >Tick Chart</text>
<rect x="424" y="934" width="2" height="22.4" fill="#404040" />
<rect x="540" y="302" width="2" height="670" fill="#a0a0a0" />
<rect x="542" y="302" width="2" height="670" fill="#696969" />
<rect x="544" y="302" width="1241" height="670" fill="#000000" />
<rect x="548" y="306" width="1237" height="2" fill="#ffffff" />
<rect x="548" y="306" width="2" height="666" fill="#ffffff" />
<text x="555.93" y="330" font-size="20.3" fill="#fff" textLength="110.43" lengthAdjust="spacingAndGlyphs" stroke="#fff" stroke-width="0.45" >EURUSD,H4</text>
<text x="677.11" y="330" font-size="20.3" fill="#fff" textLength="65.80" lengthAdjust="spacingAndGlyphs" stroke="#fff" stroke-width="0.45" >1.07172</text>
<text x="749.63" y="330" font-size="20.3" fill="#fff" textLength="65.23" lengthAdjust="spacingAndGlyphs" stroke="#fff" stroke-width="0.45" >1.07199</text>
<text x="821.92" y="330" font-size="20.3" fill="#fff" textLength="65.28" lengthAdjust="spacingAndGlyphs" stroke="#fff" stroke-width="0.45" >1.07132</text>
<text x="893.42" y="330" font-size="20.3" fill="#fff" textLength="65.28" lengthAdjust="spacingAndGlyphs" stroke="#fff" stroke-width="0.45" >1.07167</text>
<g clip-path="url(#chartclip)">
<line x1="615" y1="308" x2="615" y2="972" stroke="#778899" stroke-width="2" stroke-dasharray="6 6" stroke-dashoffset="2"/>
<line x1="679" y1="308" x2="679" y2="972" stroke="#778899" stroke-width="2" stroke-dasharray="6 6" stroke-dashoffset="2"/>
<line x1="743" y1="308" x2="743" y2="972" stroke="#778899" stroke-width="2" stroke-dasharray="6 6" stroke-dashoffset="2"/>
<line x1="807" y1="308" x2="807" y2="972" stroke="#778899" stroke-width="2" stroke-dasharray="6 6" stroke-dashoffset="2"/>
<line x1="871" y1="308" x2="871" y2="972" stroke="#778899" stroke-width="2" stroke-dasharray="6 6" stroke-dashoffset="2"/>
<line x1="935" y1="308" x2="935" y2="972" stroke="#778899" stroke-width="2" stroke-dasharray="6 6" stroke-dashoffset="2"/>
<line x1="999" y1="308" x2="999" y2="972" stroke="#778899" stroke-width="2" stroke-dasharray="6 6" stroke-dashoffset="2"/>
<line x1="1063" y1="308" x2="1063" y2="972" stroke="#778899" stroke-width="2" stroke-dasharray="6 6" stroke-dashoffset="2"/>
<line x1="1127" y1="308" x2="1127" y2="972" stroke="#778899" stroke-width="2" stroke-dasharray="6 6" stroke-dashoffset="2"/>
<line x1="1191" y1="308" x2="1191" y2="972" stroke="#778899" stroke-width="2" stroke-dasharray="6 6" stroke-dashoffset="2"/>
<line x1="1255" y1="308" x2="1255" y2="972" stroke="#778899" stroke-width="2" stroke-dasharray="6 6" stroke-dashoffset="2"/>
<line x1="1319" y1="308" x2="1319" y2="972" stroke="#778899" stroke-width="2" stroke-dasharray="6 6" stroke-dashoffset="2"/>
<line x1="1383" y1="308" x2="1383" y2="972" stroke="#778899" stroke-width="2" stroke-dasharray="6 6" stroke-dashoffset="2"/>
<line x1="1447" y1="308" x2="1447" y2="972" stroke="#778899" stroke-width="2" stroke-dasharray="6 6" stroke-dashoffset="2"/>
<line x1="1511" y1="308" x2="1511" y2="972" stroke="#778899" stroke-width="2" stroke-dasharray="6 6" stroke-dashoffset="2"/>
<line x1="1575" y1="308" x2="1575" y2="972" stroke="#778899" stroke-width="2" stroke-dasharray="6 6" stroke-dashoffset="2"/>
<line x1="1639" y1="308" x2="1639" y2="972" stroke="#778899" stroke-width="2" stroke-dasharray="6 6" stroke-dashoffset="2"/>
<line x1="1703" y1="308" x2="1703" y2="972" stroke="#778899" stroke-width="2" stroke-dasharray="6 6" stroke-dashoffset="2"/>
<line x1="1767" y1="308" x2="1767" y2="972" stroke="#778899" stroke-width="2" stroke-dasharray="6 6" stroke-dashoffset="2"/>
<line x1="552" y1="375" x2="1785" y2="375" stroke="#778899" stroke-width="2" stroke-dasharray="6 6"/>
<line x1="552" y1="441" x2="1785" y2="441" stroke="#778899" stroke-width="2" stroke-dasharray="6 6"/>
<line x1="552" y1="507" x2="1785" y2="507" stroke="#778899" stroke-width="2" stroke-dasharray="6 6"/>
<line x1="552" y1="575" x2="1785" y2="575" stroke="#778899" stroke-width="2" stroke-dasharray="6 6"/>
<line x1="552" y1="641" x2="1785" y2="641" stroke="#778899" stroke-width="2" stroke-dasharray="6 6"/>
<line x1="552" y1="707" x2="1785" y2="707" stroke="#778899" stroke-width="2" stroke-dasharray="6 6"/>
<line x1="552" y1="773" x2="1785" y2="773" stroke="#778899" stroke-width="2" stroke-dasharray="6 6"/>
<line x1="552" y1="841" x2="1785" y2="841" stroke="#778899" stroke-width="2" stroke-dasharray="6 6"/>
<line x1="552" y1="907" x2="1785" y2="907" stroke="#778899" stroke-width="2" stroke-dasharray="6 6"/>
<rect x="550" y="564" width="1240" height="2" fill="#778899" />
<rect x="996" y="792" width="4" height="180" fill="#00ff00" />
<rect x="1000" y="796" width="22" height="4" fill="#00ff00" />
<rect x="1060" y="766" width="4" height="206" fill="#00ff00" />
<rect x="1036" y="798" width="24" height="4" fill="#00ff00" />
</g>
</g>
<g>
<path d="M288 189 L339 213 L327.5 223.2 L393.5 321 Q392 325.5 388.5 324 L312 235 L300.5 243 Z" fill="#000" opacity="0.18" transform="translate(1,3)" filter="url(#shadow2)"/>
<path d="M288 189 L339 213 L327.5 223.2 L393.5 321 Q392 325.5 388.5 324 L312 235 L300.5 243 Z" fill="#54c596" stroke="#54c596" stroke-width="3" stroke-linejoin="round"/>
</g>
</svg></body></html>
